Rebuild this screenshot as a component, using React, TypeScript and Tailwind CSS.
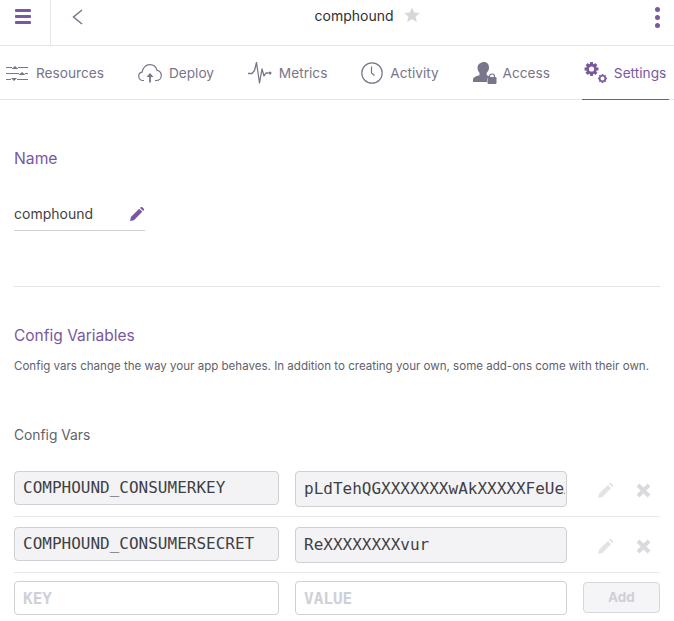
import type { ReactNode } from 'react'

const sans = "font-['Inter',sans-serif]"

function SlidersIcon() {
  return (
    <svg className="-ml-[1px] mr-[1px]" width="22" height="18" viewBox="0 0 22 18" fill="none" stroke="#79758a" strokeWidth="1">
      <path d="M0 3.500h6M12 3.500h10M0 9.500h13M19 9.500h3M0 15.500h5M11 15.500h11" />
      <path d="M5.500 5l3.500-3 3.500 3zM12.500 11l3.500-3 3.500 3zM5 14l3 3 3-3z" fill="#79758a" stroke="none" />
    </svg>
  )
}

function CloudIcon() {
  return (
    <svg width="24" height="20" viewBox="0 0 24 20" fill="none" stroke="#79758a" strokeWidth="1.200">
      <path d="M6 17.500H5C2.500 17.500.7 15.500.7 13.300c0-2 1.400-3.700 3.300-4.100C4.600 5.200 7.700 1.700 11.800 1.700c3.600 0 6.400 2.500 7.300 5.700 2.400.5 4.200 2.700 4.200 5.200 0 2.800-2.200 4.900-4.800 4.900H17" />
      <path d="M12 19.500V11" strokeWidth="1.800" />
      <path d="M8.500 14L12 10l3.500 4z" fill="#79758a" stroke="none" />
    </svg>
  )
}

function PulseIcon() {
  return (
    <svg width="24" height="22" viewBox="0 0 24 22" fill="none" stroke="#79758a" strokeWidth="1.300" strokeLinejoin="round">
      <path d="M0 11.500h4l2.500-3L8.500.5l3 20.500 2.500-14 2 7 2-3h2.500" />
      <circle cx="22" cy="11" r="1.500" fill="#79758a" stroke="none" />
    </svg>
  )
}

function ClockIcon() {
  return (
    <svg width="22" height="22" viewBox="0 0 22 22" fill="none" stroke="#79758a" strokeWidth="1.200">
      <circle cx="11" cy="11" r="10.200" />
      <path d="M10.500 4.500v6.500l3 2.500" />
    </svg>
  )
}

function PersonLockIcon() {
  return (
    <svg className="-mr-[1px]" width="24" height="23" viewBox="0 0 24 23">
      <path d="M11 1c3 0 5 2.300 5 5.500 0 2.300-1 4.200-2.300 5.300v2.500c1.100.4 2 .8 2.800 1.200-1.400.5-2.500 1.800-2.500 3.500V21H0v-2.500c0-2 2.600-3.300 6.500-4.200v-2.500C5.200 10.700 4.500 8.800 4.500 6.500 4.500 3.300 8 1 11 1z" fill="#79758a" />
      <rect x="14.500" y="16" width="9" height="7" rx="1.200" fill="#79758a" />
      <path d="M16.500 16.500v-1a2.500 2.500 0 015 0v1" fill="none" stroke="#79758a" strokeWidth="1.200" />
    </svg>
  )
}

function GearPath({ cx, cy, r, width }: { cx: number; cy: number; r: number; width: number }) {
  return (
    <g>
      <circle cx={cx} cy={cy} r={r} fill="none" stroke="#79589f" strokeWidth={width} />
      {[0, 45, 90, 135, 180, 225, 270, 315].map((a) => (
        <rect
          key={a}
          x={cx - width * 0.55}
          y={cy - r - width * 1.05}
          width={width * 1.1}
          height={width * 0.8}
          fill="#79589f"
          transform={`rotate(${a} ${cx} ${cy})`}
        />
      ))}
    </g>
  )
}

function GearsIcon() {
  return (
    <svg className="-mr-[1px]" width="24" height="22" viewBox="0 0 24 22">
      <GearPath cx={7.500} cy={7} r={4} width={2.800} />
      <GearPath cx={18.500} cy={16.500} r={2.800} width={1.600} />
    </svg>
  )
}

function Pencil({ color, size }: { color: string; size: number }) {
  return (
    <svg width={size} height={size} viewBox="0 0 16 16" fill={color}>
      <path d="M0 16l1-4.500L10.500 2 14 5.500 4.500 15z" />
      <path d="M11.500 1l1-1c.4-.300 1-.300 1.300 0l2.200 2.200c.300.400.300.900 0 1.300l-1 1z" />
    </svg>
  )
}

function Cross() {
  return (
    <svg width="15" height="15" viewBox="0 0 15 15" stroke="#d9d9de" strokeWidth="4" fill="none">
      <path d="M2 2l11 11M13 2L2 13" />
    </svg>
  )
}

function Tab({ icon, label, active }: { icon: ReactNode; label: string; active?: boolean }) {
  return (
    <div
      className={`flex h-[54px] items-center gap-[7px] pl-[2px] border-b ${
        active ? 'border-[#79589f] pr-[3px] text-[#79589f]' : 'border-transparent pr-[2px] text-[#79758a]'
      }`}
    >
      {icon}
      <span className="text-[13.700px] leading-[20px]">{label}</span>
    </div>
  )
}

const inputBase =
  "rounded-[4px] border border-[#cfcfd6] pl-[8px] text-[16px] text-[#3f3f44] font-['DejaVu_Sans_Mono',monospace] outline-none"

function VarRow({ name, value }: { name: string; value: string }) {
  return (
    <div className="flex items-center h-[56px] border-b border-[#e8e8ec]">
      <input readOnly defaultValue={name} className={`${inputBase} mb-[1px] h-[34px] w-[265px] bg-[#f3f3f6] pb-[1px]`} />
      <input readOnly defaultValue={value} className={`${inputBase} ml-[16px] h-[36px] w-[272px] bg-[#f3f3f6] pr-[1px]`} />
      <div className="ml-[31px] mt-[3px] flex items-center gap-[23px]">
        <Pencil color="#e3e3e6" size={15} />
        <Cross />
      </div>
    </div>
  )
}

export default function App() {
  return (
    <div className={`h-[621px] w-[674px] overflow-hidden bg-white ${sans}`}>
      {/* Top bar */}
      <div className="relative flex h-[46px] border-b border-[#e5e5e8]">
        <div className="flex w-[51px] items-start justify-start border-r border-[#e5e5e8] pl-[15px] pt-[9px]">
          <div className="flex flex-col gap-[3px]">
            <div className="h-[3px] w-[16px] rounded-[1px] bg-[#79589f]" />
            <div className="h-[3px] w-[16px] rounded-[1px] bg-[#79589f]" />
            <div className="h-[3px] w-[16px] rounded-[1px] bg-[#79589f]" />
          </div>
        </div>
        <svg className="ml-[21px] mt-[9px]" width="11" height="16" viewBox="0 0 11 16" fill="none" stroke="#79758a" strokeWidth="1.500">
          <path d="M10 1L1.500 8l8.500 7" />
        </svg>
        <div className="flex flex-1 items-start justify-center gap-[10px] pt-[7px] pr-[4px]">
          <span className="text-[14px] leading-[18px] text-[#2f2f33]">comphound</span>
          <svg width="16" height="16" viewBox="0 0 16 16" fill="#d6d6dc">
            <path d="M8 .5l2.200 5.100 5.500.5-4.200 3.600 1.300 5.400L8 12.300l-4.800 2.800 1.300-5.400L.3 6.100l5.500-.5z" />
          </svg>
        </div>
        <div className="mr-[14px] mt-[7px] flex flex-col gap-[3px]">
          <div className="h-[5px] w-[5px] rounded-full bg-[#79589f]" />
          <div className="h-[5px] w-[5px] rounded-full bg-[#79589f]" />
          <div className="h-[5px] w-[5px] rounded-full bg-[#79589f]" />
        </div>
      </div>

      {/* Tabs */}
      <div className="flex h-[54px] gap-[29.800px] border-b border-[#e5e5e8] pl-[5px]">
        <Tab icon={<SlidersIcon />} label="Resources" />
        <Tab icon={<CloudIcon />} label="Deploy" />
        <Tab icon={<PulseIcon />} label="Metrics" />
        <Tab icon={<ClockIcon />} label="Activity" />
        <Tab icon={<PersonLockIcon />} label="Access" />
        <Tab icon={<GearsIcon />} label="Settings" active />
      </div>

      {/* Settings content */}
      <div className="px-[14px]">
        <div className="border-b border-[#e5e5e8] h-[187px] pt-[49px]">
          <h2 className="text-[15.700px] leading-[20px] text-[#79589f]">Name</h2>
          <div className="mt-[25px] flex h-[37px] w-[131px] items-center justify-between border-b border-[#cfcfd6] pr-[1px] pt-[3px]">
            <span className="text-[14px] text-[#3f3f44]">comphound</span>
            <Pencil color="#79589f" size={14} />
          </div>
        </div>

        <h2 className="mt-[39px] text-[15.500px] leading-[20px] text-[#79589f]">Config Variables</h2>
        <p className="mt-[12px] whitespace-nowrap text-[11.560px] leading-[16px] text-[#62626a]">
          Config vars change the way your app behaves. In addition to creating your own, some add-ons come with their own.
        </p>
        <h3 className="mt-[52px] text-[13.800px] leading-[18px] text-[#62626a]">Config Vars</h3>

        <div className="mt-[17px] w-[646px]">
          <VarRow name="COMPHOUND_CONSUMERKEY" value="pLdTehQGXXXXXXXwAkXXXXXFeUeXXXXXX" />
          <VarRow name="COMPHOUND_CONSUMERSECRET" value="ReXXXXXXXXvur" />
          <div className="flex items-start h-[50px] pt-[8px]">
            <input placeholder="KEY" className={`${inputBase} h-[34px] w-[265px] bg-white placeholder:text-[#d0d0d8] placeholder:font-bold`} />
            <input placeholder="VALUE" className={`${inputBase} ml-[16px] h-[34px] w-[272px] bg-white placeholder:text-[#d0d0d8] placeholder:font-bold`} />
            <button className="ml-[16px] mt-[1px] h-[31px] w-[77px] rounded-[4px] border border-[#d6d6dc] bg-[#f5f5f7] text-[13.500px] font-bold text-[#cfcfd6]">
              Add
            </button>
          </div>
        </div>
      </div>
    </div>
  )
}
